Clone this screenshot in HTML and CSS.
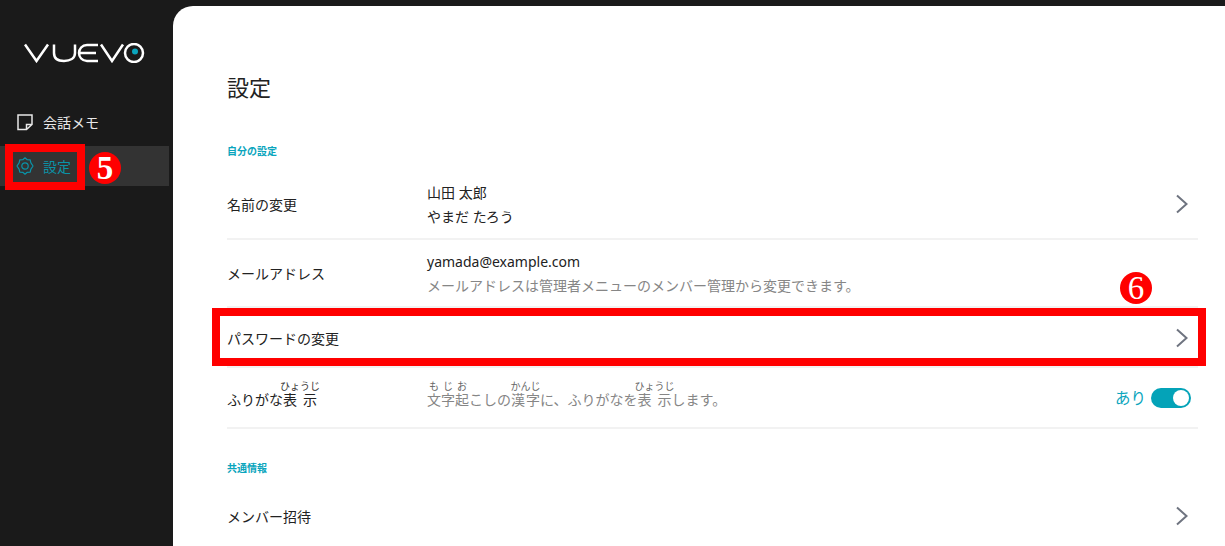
FILE: index.html
```html
<!DOCTYPE html>
<html lang="ja">
<head>
<meta charset="utf-8">
<title>設定</title>
<link rel="stylesheet" href="styles.css">
</head>
<body>
<div class="app">
  <aside class="sidebar">
    <svg class="logo" width="121" height="20" viewBox="0 0 121 20" fill="none" stroke="#fff" stroke-width="2.500">
      <path d="M1 1.500 L12.500 18 L24 1.500"/>
      <path d="M30 1.500 V10 C30 15.500 34 18 40 18 C46 18 51 15.500 51 10 V1.500"/>
      <path d="M74 2 H63 C58 2 55 6 55 10 C55 14 58 18 63 18 H74 M56 10 H72"/>
      <path d="M77 1.500 L88 18 L99 1.500"/>
      <circle cx="110" cy="10" r="9"/>
      <circle class="logo-dot" cx="111" cy="8.500" r="3"/>
    </svg>
    <nav class="nav">
      <a class="nav-item">
        <svg width="18" height="18" viewBox="0 0 18 18" fill="none" stroke="#e8e8e8" stroke-width="1.500"><path d="M2 2 H16 V11.500 L10.500 16.500 H2 Z M16 11.500 H10.500 V16.500"/></svg>
        <span>会話メモ</span>
      </a>
      <a class="nav-item active">
        <svg width="18" height="18" viewBox="0 0 18 18" fill="none" stroke="#0a93a8" stroke-width="1.200" stroke-linejoin="round"><path d="M9 .8 L11.200 2.700 L14.200 2.800 L14.800 5.600 L17 9 L14.800 12.400 L14.200 15.200 L11.200 15.300 L9 17.200 L6.800 15.300 L3.800 15.200 L3.200 12.400 L1 9 L3.200 5.600 L3.800 2.800 L6.800 2.700 Z"/><circle cx="9" cy="9" r="3.200"/></svg>
        <span>設定</span>
      </a>
    </nav>
  </aside>
  <main class="panel">
    <h1 class="title">設定</h1>
    <h2 class="section first">自分の設定</h2>
    <div class="row row-name">
      <div class="label">名前の変更</div>
      <div class="value"><p>山田 太郎</p><p>やまだ たろう</p></div>
      <svg class="chev" width="14" height="20" viewBox="0 0 14 20" fill="none" stroke="#6f7480" stroke-width="2"><path d="M2 1.500 L11.500 10 L2 18.500"/></svg>
    </div>
    <div class="row row-mail">
      <div class="label">メールアドレス</div>
      <div class="value"><p>yamada@example.com</p><p class="muted">メールアドレスは管理者メニューのメンバー管理から変更できます。</p></div>
    </div>
    <div class="row row-pass">
      <div class="label">パスワードの変更</div>
      <div class="value"></div>
      <svg class="chev" width="14" height="20" viewBox="0 0 14 20" fill="none" stroke="#6f7480" stroke-width="2"><path d="M2 1.500 L11.500 10 L2 18.500"/></svg>
    </div>
    <div class="row row-furi">
      <div class="label">ふりがな<ruby>表示<rt>ひょうじ</rt></ruby></div>
      <div class="value muted"><ruby>文字<rt>もじ</rt></ruby><ruby>起<rt>お</rt></ruby>こしの<ruby>漢字<rt>かんじ</rt></ruby>に、ふりがなを<ruby>表示<rt>ひょうじ</rt></ruby>します。</div>
      <div class="switch-wrap"><span class="switch-text">あり</span><span class="switch"><span class="knob"></span></span></div>
    </div>
    <h2 class="section">共通情報</h2>
    <div class="row row-invite">
      <div class="label">メンバー招待</div>
      <div class="value"></div>
      <svg class="chev" width="14" height="20" viewBox="0 0 14 20" fill="none" stroke="#6f7480" stroke-width="2"><path d="M2 1.500 L11.500 10 L2 18.500"/></svg>
    </div>
  </main>
</div>
<div class="mark mark-nav"></div>
<div class="mark mark-row"></div>
<div class="num num-5">5</div>
<div class="num num-6">6</div>
</body>
</html>
```
FILE: styles.css
```css
* { box-sizing: border-box; }
html, body { margin: 0; height: 546px; overflow: hidden; }
body {
  background: #1a1a1a;
  font-family: "Noto Sans", "Noto Sans CJK JP", sans-serif;
  color: #222;
  position: relative;
}
.app { display: flex; height: 546px; }
.sidebar { width: 173px; flex: none; display: flex; flex-direction: column; }
.logo { margin: 43px 0 0 24px; display: block; }
.logo-dot { fill: #0aa5bd; stroke: none; }
.nav { margin-top: 39px; display: flex; flex-direction: column; gap: 4px; padding-right: 4px; }
.nav-item {
  display: flex; align-items: center; gap: 9px;
  height: 40px; padding-left: 16px;
  font-size: 14px; color: #e8e8e8;
}
.nav-item.active { background: #333; color: #0a93a8; }
.panel {
  flex: 1; margin-top: 6px;
  background: #fff; border-top-left-radius: 20px;
  padding: 0 27px 0 54px; overflow: hidden;
}
.title { margin: 63px 0 0; font-size: 22px; font-weight: 400; line-height: 36px; color: #222; }
.section { margin: 0; font-size: 10px; font-weight: 700; line-height: 14px; color: #0aa5bd; }
.section.first { margin-top: 39px; }
.section:not(.first) { margin-top: 32px; }
.row { display: flex; align-items: center; border-bottom: 2px solid #f2f2f2; font-size: 14px; }
.label { width: 200px; flex: none; color: #222; }
.value { flex: 1; color: #222; }
.value p { margin: 0; line-height: 24px; }
.muted, .value p.muted { color: #868686; }
.chev { flex: none; margin-right: 9px; }
.row-name { height: 71px; margin-top: 11px; }
.row-name .value, .row-mail .value { padding-top: 2px; }
.row-mail { height: 68px; }
.row-pass { height: 60px; padding-top: 2px; }
.row-furi { height: 61px; }
.row-furi .label, .row-furi .value { padding-bottom: 5px; }
.row-invite { height: 60px; margin-top: 11px; border-bottom: 0; }
rt { font-size: 10px; line-height: 1.100; color: #333; }
.value rt { color: #666; }
.switch-wrap { display: flex; align-items: center; gap: 5px; margin-right: 7px; }
.switch-text { color: #0aa5bd; font-size: 15.500px; }
.switch { width: 40px; height: 20px; border-radius: 10px; background: #04a3b8; display: flex; justify-content: flex-end; align-items: center; padding-right: 2px; }
.knob { width: 16px; height: 16px; border-radius: 50%; background: #fff; }
.mark { position: absolute; border: 8px solid #f00; }
.mark-nav { left: 5px; top: 144px; width: 80px; height: 46px; }
.mark-row { left: 212px; top: 308px; width: 994px; height: 58px; }
.num {
  position: absolute; width: 32px; height: 32px; border-radius: 50%;
  background: #f00; color: #fff;
  font-family: "Liberation Serif", serif; font-size: 33px; line-height: 32px; text-align: center;
}
.num-5 { left: 89px; top: 152px; font-weight: 700; }
.num-6 { left: 1120px; top: 272px; }
```
